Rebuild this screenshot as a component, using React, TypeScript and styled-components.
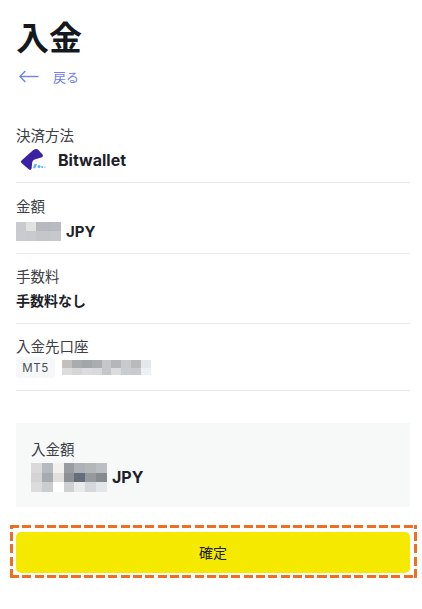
import React from 'react';
import styled, { createGlobalStyle } from 'styled-components';

/* ---------- data ---------- */
const amountCells = [
    ['#c8cacd', '#c8cacd', '#e1e1e1', '#e1e1e1', '#b5b9bd', '#b5b9bd', '#b5b9bd', '#b8bcc0', '#b8bcc0'],
    ['#c9cbce', '#c9cbce', '#c8cacd', '#c8cacd', '#c4c6c9', '#c4c6c9', '#c4c6c9', '#c6c8cb', '#c6c8cb'],
];
const accountCells = [
    ['#c2bfbd', '#a9acaf', '#a2a6a9', '#a9adb0', '#c4c6c9', '#b4b6b9', '#c8cacd', '#b8babc', '#e4e8ec'],
    ['#dcdcdc', '#d4d5d7', '#dcdcde', '#d8d9db', '#c4c6c9', '#dcdcdc', '#c9ccd0', '#c8cbce', '#edf0f4'],
];
const totalCells = [
    ['#dadada', '#b6b9bd', '#f2f1f0', '#999da1', '#aeb1b5', '#b5b6b8', '#bcbec2'],
    ['#d4d4d4', '#a6abb0', '#e2ded9', '#8d9094', '#636e7a', '#95999e', '#868b90'],
    ['#dcdcdc', '#cbcccd', '#ffffff', '#cfd0d2', '#e9eaec', '#d6d7da', '#e4e7ea'],
];

/* ---------- styles ---------- */
const GlobalStyle = createGlobalStyle`
    html, body {
        margin: 0;
        background: #fff;
    }
    body {
        font-family: "Inter", "Noto Sans CJK JP", sans-serif;
        color: #1b2126;
    }
`;

const Page = styled.div`
    width: 422px;
    height: 609px;
    overflow: hidden;
    box-sizing: border-box;
    padding: 16px 12px 0 16px;
`;

const Title = styled.h1`
    margin: 0;
    font-size: 33px;
    line-height: 44px;
    font-weight: 700;
    color: #14191e;
`;

const BackLink = styled.a`
    display: flex;
    align-items: center;
    gap: 14px;
    margin: 5px 0 0 3px;
    height: 22px;
    font-size: 13px;
    color: #6f80f0;
`;

const Details = styled.div`
    margin-top: 39px;
`;

const Row = styled.div<{ $height: number; $top?: number }>`
    height: ${(props) => props.$height}px;
    padding-top: ${(props) => props.$top ?? 0}px;
    box-sizing: border-box;
    border-bottom: 1px solid #e9eaeb;
`;

const Label = styled.div`
    font-size: 14.5px;
    line-height: 20px;
    color: #3b4046;
`;

const Value = styled.div<{ $shift?: number }>`
    display: flex;
    align-items: center;
    min-height: 28px;
    margin-top: ${(props) => props.$shift ?? 0}px;
    font-size: 14px;
    font-weight: 700;
    color: #1b2126;
`;

const MethodName = styled.span`
    margin-left: 10px;
    font-size: 16px;
`;

const Mosaic = styled.div<{ $cols: number; $cell: number; $rowHeight: number }>`
    display: grid;
    grid-template-columns: repeat(${(props) => props.$cols}, ${(props) => props.$cell}px);
    grid-auto-rows: ${(props) => props.$rowHeight}px;
    flex-shrink: 0;
`;

const Currency = styled.span<{ $size: number }>`
    margin-left: 5px;
    font-size: ${(props) => props.$size}px;
`;

const AccountLine = styled.div`
    display: flex;
    align-items: center;
    gap: 7px;
`;

const Badge = styled.span`
    width: 39px;
    height: 21px;
    display: flex;
    align-items: center;
    justify-content: center;
    border-radius: 3px;
    background: #f6f7f8;
    font-size: 11.5px;
    letter-spacing: 0.6px;
    color: #4a4f55;
`;

const Summary = styled.div`
    margin-top: 32px;
    height: 84px;
    box-sizing: border-box;
    padding: 17px 15px 0;
    background: #f7f9f9;
`;

const Highlight = styled.div`
    margin: 18px 0 0 -6px;
    width: 407px;
    height: 53px;
    box-sizing: border-box;
    padding: 7px 7px 5px 6px;
    background-image:
        repeating-linear-gradient(90deg, #ee6f22 0 9px, transparent 9px 12.3px),
        repeating-linear-gradient(90deg, #ee6f22 0 9px, transparent 9px 12.3px),
        repeating-linear-gradient(0deg, #ee6f22 0 9px, transparent 9px 12.3px),
        repeating-linear-gradient(0deg, #ee6f22 0 9px, transparent 9px 12.3px);
    background-size: 100% 3px, 100% 3px, 3px 100%, 3px 100%;
    background-position: 0 0, 0 100%, 0 0, 100% 0;
    background-repeat: no-repeat;
`;

const ConfirmButton = styled.button`
    display: block;
    width: 100%;
    height: 41px;
    padding: 0 0 2px;
    border: 0;
    border-radius: 5px;
    background: #f5e900;
    font-family: inherit;
    font-size: 14px;
    color: #1b2126;
`;

/* ---------- parts ---------- */
function Blur({ cells, cell, rowHeight }: { cells: string[][]; cell: number; rowHeight: number }) {
    return (
        <Mosaic $cols={cells[0].length} $cell={cell} $rowHeight={rowHeight}>
            {cells.flat().map((color, i) => (
                <div key={i} style={{ background: color }} />
            ))}
        </Mosaic>
    );
}

function BitwalletLogo() {
    return (
        <svg width="32" height="24" viewBox="0 0 32 24" style={{ flexShrink: 0 }}>
            <path d="M5.5 12.5 L17 2.2 Q20 0.4 22 1.6 L26.5 6.5 Q27.8 8.4 26 9.2 L18.5 11.6 Q16.4 12.4 16.2 14.5 L15.6 20.5 Q14.6 22.6 13 21.6 L5.5 15 Q4.2 13.7 5.5 12.5 Z" fill="#3b22a3" />
            <path d="M18 17 Q19 15.4 21 16 Q20.4 18 19.6 19.4 Q18.4 20.6 17 20.2 Z" fill="#57b5f5" />
            <circle cx="23" cy="18.6" r="1.5" fill="#57b5f5" />
            <circle cx="26.2" cy="19" r="1.1" fill="#57b5f5" />
            <circle cx="28.8" cy="19.3" r="0.8" fill="#8ccdf8" />
        </svg>
    );
}

function BackArrow() {
    return (
        <svg width="20" height="14" viewBox="0 0 20 14" fill="none" stroke="#6f80f0" strokeWidth="1.4">
            <path d="M0.8 7.5 H19.5" />
            <path d="M6.3 2 L0.9 7.5 L6.3 13" />
        </svg>
    );
}

export default function App() {
    return (
        <Page>
            <GlobalStyle />
            <Title>入金</Title>
            <BackLink>
                <BackArrow />
                戻る
            </BackLink>
            <Details>
                <Row $height={57}>
                    <Label>決済方法</Label>
                    <Value>
                        <BitwalletLogo />
                        <MethodName>Bitwallet</MethodName>
                    </Value>
                </Row>
                <Row $height={71} $top={14}>
                    <Label>金額</Label>
                    <Value>
                        <Blur cells={amountCells} cell={5} rowHeight={9.5} />
                        <Currency $size={15}>JPY</Currency>
                    </Value>
                </Row>
                <Row $height={70} $top={13}>
                    <Label>手数料</Label>
                    <Value $shift={-1}>手数料なし</Value>
                </Row>
                <Row $height={67} $top={13}>
                    <Label>入金先口座</Label>
                    <AccountLine>
                        <Badge>MT5</Badge>
                        <Blur cells={accountCells} cell={9.9} rowHeight={7.5} />
                    </AccountLine>
                </Row>
            </Details>
            <Summary>
                <Label>入金額</Label>
                <Value $shift={3}>
                    <Blur cells={totalCells} cell={10.86} rowHeight={9.67} />
                    <Currency $size={16}>JPY</Currency>
                </Value>
            </Summary>
            <Highlight>
                <ConfirmButton>確定</ConfirmButton>
            </Highlight>
        </Page>
    );
}
